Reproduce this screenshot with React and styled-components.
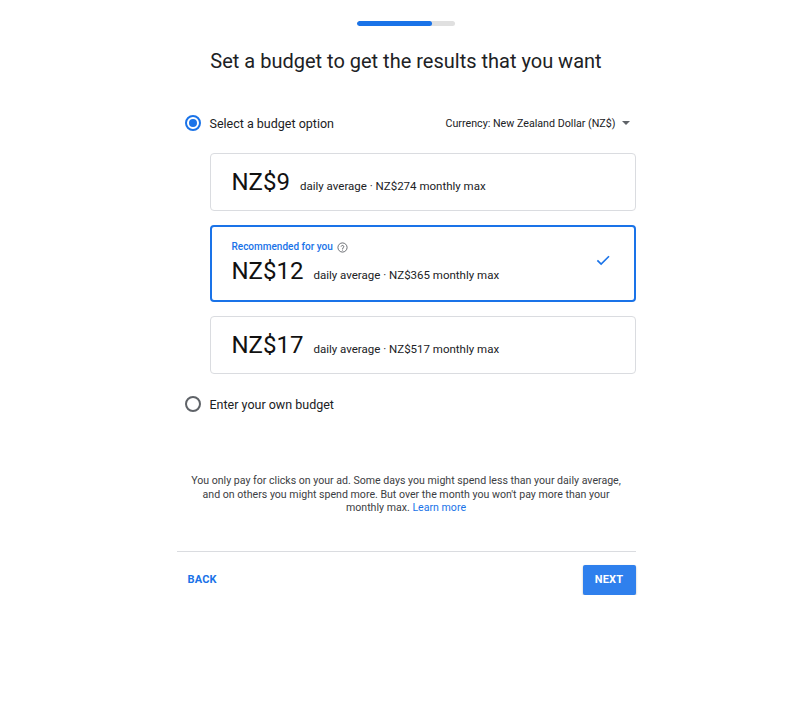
import React from 'react';
import styled, { createGlobalStyle } from 'styled-components';

const GlobalStyle = createGlobalStyle`
  body {
    margin: 0;
    background: #ffffff;
    font-family: Roboto, "Noto Sans", Arial, sans-serif;
    color: #202124;
  }
`;

const options = [
  { price: 'NZ$9', monthly: 'NZ$274' },
  { price: 'NZ$12', monthly: 'NZ$365', recommended: true },
  { price: 'NZ$17', monthly: 'NZ$517' },
];

function App() {
  return (
    <>
      <GlobalStyle />
      <Page>
        <Progress>
          <ProgressFill />
        </Progress>
        <Title>Set a budget to get the results that you want</Title>

        <Content>
          <OptionRow>
            <Radio checked />
            <RadioLabel>Select a budget option</RadioLabel>
            <Currency>
              Currency: New Zealand Dollar (NZ$)
              <Caret />
            </Currency>
          </OptionRow>

          <Cards>
            {options.map((o) => (
              <Card key={o.price} selected={o.recommended}>
                <CardText>
                  {o.recommended && (
                    <Recommended>
                      Recommended for you
                      <svg width="11" height="11" viewBox="0 0 24 24">
                        <circle cx="12" cy="12" r="10" fill="none" stroke="#5f6368" strokeWidth="2" />
                        <path d="M9.2 9.3a2.9 2.9 0 0 1 5.6 1c0 1.9-2.8 2.5-2.8 4.2" fill="none" stroke="#5f6368" strokeWidth="2" strokeLinecap="round" />
                        <circle cx="12" cy="17.6" r="1.2" fill="#5f6368" />
                      </svg>
                    </Recommended>
                  )}
                  <PriceLine>
                    <Price>{o.price}</Price>
                    <Detail>daily average · {o.monthly} monthly max</Detail>
                  </PriceLine>
                </CardText>
                {o.recommended && (
                  <Check width="18" height="18" viewBox="0 0 24 24">
                    <path d="M4.5 12.5l5 5L20 7" fill="none" stroke="#1a73e8" strokeWidth="2.2" />
                  </Check>
                )}
              </Card>
            ))}
          </Cards>

          <OptionRow>
            <Radio />
            <RadioLabel>Enter your own budget</RadioLabel>
          </OptionRow>

          <Note>
            You only pay for clicks on your ad. Some days you might spend less than your daily average,
            and on others you might spend more. But over the month you won't pay more than your
            monthly max. <a href="#">Learn more</a>
          </Note>

          <Footer>
            <TextButton>BACK</TextButton>
            <PrimaryButton>NEXT</PrimaryButton>
          </Footer>
        </Content>
      </Page>
    </>
  );
}

const Page = styled.div`
  display: flex;
  flex-direction: column;
  align-items: center;
  padding-top: 21px;
  padding-left: 1px;
`;

const Progress = styled.div`
  width: 98px;
  height: 5px;
  border-radius: 3px;
  background: #e0e0e0;
  overflow: hidden;
`;

const ProgressFill = styled.div`
  width: 77%;
  height: 100%;
  border-radius: 3px;
  background: #1a73e8;
`;

const Title = styled.h1`
  margin: 21px 0 0;
  font-size: 20px;
  font-weight: 400;
  line-height: 28px;
  color: #202124;
`;

const Content = styled.div`
  width: 459px;
  margin-top: 36px;
  display: flex;
  flex-direction: column;
`;

const OptionRow = styled.div`
  display: flex;
  align-items: center;
  height: 24px;
  padding-left: 8px;
`;

const Radio = styled.span`
  box-sizing: border-box;
  width: 16px;
  height: 16px;
  border-radius: 50%;
  border: 2px solid ${(p) => (p.checked ? '#1a73e8' : '#5f6368')};
  position: relative;
  flex-shrink: 0;
  &::after {
    content: '';
    display: ${(p) => (p.checked ? 'block' : 'none')};
    position: absolute;
    inset: 2px;
    border-radius: 50%;
    background: #1a73e8;
  }
`;

const RadioLabel = styled.span`
  margin-left: 9px;
  font-size: 12.5px;
  color: #202124;
`;

const Currency = styled.span`
  margin-left: auto;
  margin-right: 6px;
  display: flex;
  align-items: center;
  font-size: 10.7px;
  color: #202124;
`;

const Caret = styled.span`
  margin-left: 6px;
  width: 0;
  height: 0;
  border-left: 4px solid transparent;
  border-right: 4px solid transparent;
  border-top: 4px solid #5f6368;
`;

const Cards = styled.div`
  display: flex;
  flex-direction: column;
  gap: 14px;
  margin: 18px 0 18px 33px;
`;

const Card = styled.div`
  box-sizing: border-box;
  display: flex;
  align-items: center;
  justify-content: space-between;
  min-height: ${(p) => (p.selected ? '77px' : '58px')};
  padding: 0 22px 0 ${(p) => (p.selected ? '20px' : '21px')};
  border: ${(p) => (p.selected ? '2px solid #1a73e8' : '1px solid #dadce0')};
  border-radius: 4px;
`;

const Check = styled.svg`
  margin-bottom: 8px;
`;

const CardText = styled.div`
  display: flex;
  flex-direction: column;
`;

const Recommended = styled.div`
  display: flex;
  align-items: center;
  gap: 4px;
  font-size: 10px;
  line-height: 12px;
  font-weight: 500;
  color: #1a73e8;
  margin-bottom: 3px;
  svg {
    display: block;
  }
`;

const PriceLine = styled.div`
  display: flex;
  align-items: baseline;
  gap: 10px;
`;

const Price = styled.span`
  font-size: 24px;
  line-height: 30px;
  color: #111111;
`;

const Detail = styled.span`
  font-size: 11.5px;
  color: #202124;
`;

const Note = styled.p`
  margin: 58px 0 0;
  padding: 0 11px;
  text-align: center;
  font-size: 10.6px;
  line-height: 13.5px;
  color: #3c4043;
  a {
    color: #1a73e8;
    text-decoration: none;
  }
`;

const Footer = styled.div`
  margin-top: 36px;
  border-top: 1px solid #dadce0;
  padding-top: 13px;
  display: flex;
  align-items: center;
  justify-content: space-between;
`;

const TextButton = styled.button`
  border: none;
  background: none;
  padding: 0 11px;
  font-family: inherit;
  font-size: 11px;
  font-weight: 700;
  letter-spacing: 0.2px;
  color: #1a73e8;
`;

const PrimaryButton = styled.button`
  border: none;
  border-radius: 2px;
  background: #2f80ed;
  height: 30px;
  width: 53px;
  font-family: inherit;
  font-size: 11px;
  font-weight: 700;
  letter-spacing: 0.2px;
  color: #ffffff;
  box-shadow: 0 1px 2px rgba(0, 0, 0, 0.3);
`;

export default App;
